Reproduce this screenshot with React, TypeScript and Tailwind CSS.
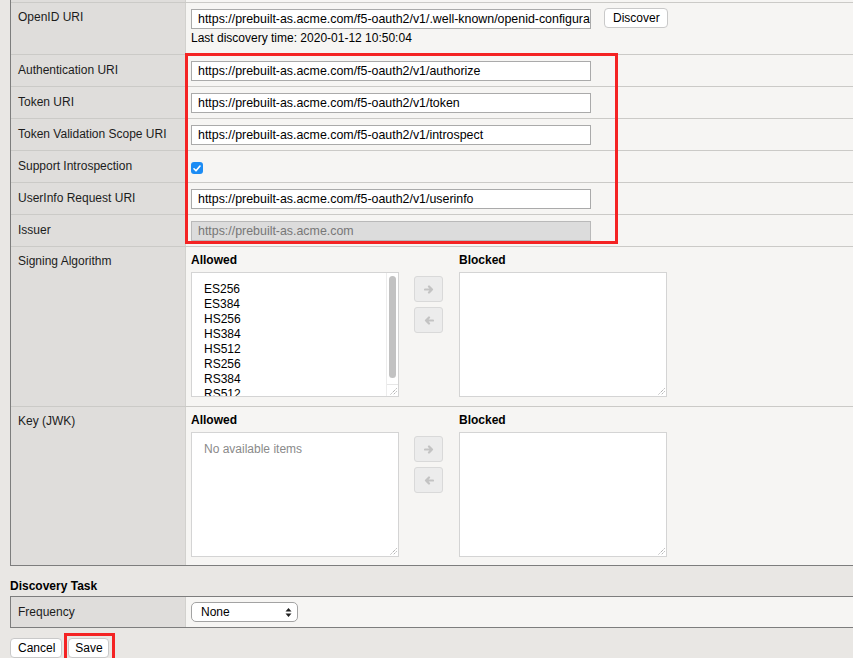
import React from 'react'

const FONT = "font-['Liberation_Sans','Helvetica','Arial',sans-serif]"

const algorithms = ['ES256', 'ES384', 'HS256', 'HS384', 'HS512', 'RS256', 'RS384', 'RS512']

function Grip() {
  return (
    <svg width="8" height="8" viewBox="0 0 8 8" className="block">
      <path d="M7.5 1.5 L1.5 7.5 M7.5 4.5 L4.5 7.5" stroke="#8a8a8a" strokeWidth="1" strokeDasharray="1 1" fill="none" />
    </svg>
  )
}

function Label({ text, tall }: { text: string; tall?: boolean }) {
  return (
    <div
      className={`w-[175px] shrink-0 bg-[#dfdddb] border-r border-[#d2d1ce] pl-[7px] text-[#1c1c1c] ${
        tall ? 'pt-[7px]' : 'pt-[8px]'
      }`}
    >
      {text}
    </div>
  )
}

function TextBox({ value, disabled }: { value: string; disabled?: boolean }) {
  return (
    <div
      className={`w-[400px] h-[20px] border pl-[6px] text-[12.4px] leading-[18px] whitespace-nowrap overflow-hidden ${
        disabled ? 'bg-[#dcdcdc] border-[#b9b9b9] text-[#777]' : 'bg-white border-[#aaa] text-black'
      }`}
    >
      {value}
    </div>
  )
}

function UriRow({ label, value, disabled }: { label: string; value: string; disabled?: boolean }) {
  return (
    <div className="flex h-[32px] border-b border-[#cbcac7]">
      <Label text={label} />
      <div className="flex-1 bg-[#f6f5f3] pl-[5px] pt-[6px]">
        <TextBox value={value} disabled={disabled} />
      </div>
    </div>
  )
}

function ArrowButton({ dir }: { dir: 'right' | 'left' }) {
  return (
    <div className="w-[29px] h-[26px] rounded-[3px] border border-[#d9d9d9] bg-[#ececec] flex items-center justify-center">
      <svg width="10" height="9" viewBox="0 0 10 9" className={dir === 'left' ? 'rotate-180' : ''}>
        <path d="M1 4.5 H8 M5 1.5 L8 4.5 L5 7.5" stroke="#c3c3c3" strokeWidth="2.2" fill="none" strokeLinecap="round" strokeLinejoin="round" />
      </svg>
    </div>
  )
}

function ListBox({ items, empty, scroll }: { items?: string[]; empty?: string; scroll?: boolean }) {
  return (
    <div className="w-[208px] h-[125px] border border-[#d4d4d4] bg-white flex overflow-hidden">
      <div className="flex-1 pl-[12px] pt-[9px] leading-[15px] overflow-hidden">
        {items?.map((it) => (
          <div key={it}>{it}</div>
        ))}
        {empty && <div className="text-[#8a8a8a]">{empty}</div>}
      </div>
      {scroll ? (
        <div className="w-[12px] border-l border-[#ececec] flex flex-col items-center">
          <div className="mt-[3px] w-[7px] h-[102px] rounded-full bg-[#c2c2c2]" />
          <div className="mt-auto w-full h-[12px] border-t border-[#e6e6e6] flex items-end justify-end pr-[1px] pb-[1px]">
            <Grip />
          </div>
        </div>
      ) : (
        <div className="flex items-end pr-[1px] pb-[1px]">
          <Grip />
        </div>
      )}
    </div>
  )
}

function DualList({ items, empty }: { items?: string[]; empty?: string }) {
  return (
    <div className="flex pt-[6px]">
      <div className="flex flex-col gap-[5px]">
        <div className="font-bold">Allowed</div>
        <ListBox items={items} empty={empty} scroll={!!items} />
      </div>
      <div className="ml-[15px] mt-[23px] flex flex-col gap-[5px]">
        <ArrowButton dir="right" />
        <ArrowButton dir="left" />
      </div>
      <div className="ml-[16px] flex flex-col gap-[5px]">
        <div className="font-bold">Blocked</div>
        <ListBox />
      </div>
    </div>
  )
}

function Button({ children, className = '' }: { children: React.ReactNode; className?: string }) {
  return (
    <div className={`h-[20px] leading-[18px] rounded-[4px] border border-[#c9c9c9] bg-white ${className}`}>
      {children}
    </div>
  )
}

export default function App() {
  return (
    <div className={`${FONT} text-[12px] leading-[14px] text-black min-h-screen bg-[#e9e7e4] pl-[10px] overflow-hidden`}>
      {/* provider settings table */}
      <div className="border-l border-b border-[#7d7d7d]">
        <div className="flex h-[3px] border-b border-[#cbcac7]">
          <div className="w-[175px] bg-[#dfdddb] border-r border-[#d2d1ce]" />
          <div className="flex-1 bg-[#f6f5f3]" />
        </div>

        <div className="flex h-[52px] border-b border-[#cbcac7]">
          <Label text="OpenID URI" tall />
          <div className="flex-1 bg-[#f6f5f3] pl-[5px] pt-[6px]">
            <div className="flex items-start">
              <TextBox value="https://prebuilt-as.acme.com/f5-oauth2/v1/.well-known/openid-configuration" />
              <Button className="ml-[13px] -mt-[1px] pl-[8px] pr-[7px]">Discover</Button>
            </div>
            <div className="mt-[2px]">Last discovery time: 2020-01-12 10:50:04</div>
          </div>
        </div>

        <div className="relative">
          <UriRow label="Authentication URI" value="https://prebuilt-as.acme.com/f5-oauth2/v1/authorize" />
          <UriRow label="Token URI" value="https://prebuilt-as.acme.com/f5-oauth2/v1/token" />
          <UriRow label="Token Validation Scope URI" value="https://prebuilt-as.acme.com/f5-oauth2/v1/introspect" />
          <div className="flex h-[32px] border-b border-[#cbcac7]">
            <Label text="Support Introspection" />
            <div className="flex-1 bg-[#f6f5f3] pl-[5px] pt-[11px]">
              <div className="w-[12px] h-[12px] rounded-[3px] bg-[#1c8cf4] flex items-center justify-center">
                <svg width="8" height="7" viewBox="0 0 8 7">
                  <path d="M1 3.8 L3 5.8 L7 1" stroke="white" strokeWidth="1.6" fill="none" strokeLinecap="round" strokeLinejoin="round" />
                </svg>
              </div>
            </div>
          </div>
          <UriRow label="UserInfo Request URI" value="https://prebuilt-as.acme.com/f5-oauth2/v1/userinfo" />
          <UriRow label="Issuer" value="https://prebuilt-as.acme.com" disabled />
          <div className="absolute left-[174px] -top-[2px] w-[433px] h-[191px] border-[3px] border-[#f42323] pointer-events-none" />
        </div>

        <div className="flex h-[160px] border-b border-[#cbcac7]">
          <Label text="Signing Algorithm" tall />
          <div className="flex-1 bg-[#f6f5f3] pl-[5px]">
            <DualList items={algorithms} />
          </div>
        </div>

        <div className="flex h-[158px]">
          <Label text="Key (JWK)" tall />
          <div className="flex-1 bg-[#f6f5f3] pl-[5px]">
            <DualList empty="No available items" />
          </div>
        </div>
      </div>

      <div className="mt-[13px] font-bold">Discovery Task</div>

      <div className="mt-[3px] flex h-[32px] border-l border-t border-b border-[#7d7d7d]">
        <Label text="Frequency" />
        <div className="flex-1 bg-[#f6f5f3] pl-[5px] pt-[5px]">
          <div className="w-[107px] h-[20px] rounded-[5px] border border-[#a3a3a3] bg-white flex items-center pl-[9px] pr-[5px]">
            <span className="flex-1">None</span>
            <svg width="7" height="11" viewBox="0 0 7 11">
              <path d="M3.5 1 L6.5 4.5 H0.5 Z M3.5 10 L6.5 6.5 H0.5 Z" fill="#222" />
            </svg>
          </div>
        </div>
      </div>

      <div className="mt-[10px] flex gap-[6px]">
        <Button className="pl-[7px] pr-[6px]">Cancel</Button>
        <div className="relative">
          <Button className="pl-[6px] pr-[5px]">Save</Button>
          <div className="absolute -left-[4px] -top-[5px] w-[51px] h-[32px] border-[3px] border-[#f42323] pointer-events-none" />
        </div>
      </div>
    </div>
  )
}
